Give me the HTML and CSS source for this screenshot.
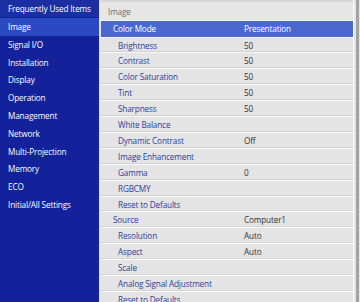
FILE: index.html
```html
<!DOCTYPE html>
<html lang="en">
<head>
    <meta charset="UTF-8">
    <title>Projector Menu</title>
    <link rel="stylesheet" href="styles.css">
</head>
<body>
    <div class="screen">
        <nav class="side">
            <div class="side-item fav">Frequently Used Items</div>
            <div class="side-item active">Image</div>
            <div class="side-item">Signal I/O</div>
            <div class="side-item">Installation</div>
            <div class="side-item">Display</div>
            <div class="side-item">Operation</div>
            <div class="side-item">Management</div>
            <div class="side-item">Network</div>
            <div class="side-item">Multi-Projection</div>
            <div class="side-item">Memory</div>
            <div class="side-item">ECO</div>
            <div class="side-item">Initial/All Settings</div>
        </nav>

        <section class="panel">
            <div class="list">
                <div class="panel-head">Image</div>
                <div class="row selected top"><span class="label">Color Mode</span><span class="value">Presentation</span></div>
                <div class="row sub"><span class="label">Brightness</span><span class="value">50</span></div>
                <div class="row sub"><span class="label">Contrast</span><span class="value">50</span></div>
                <div class="row sub"><span class="label">Color Saturation</span><span class="value">50</span></div>
                <div class="row sub"><span class="label">Tint</span><span class="value">50</span></div>
                <div class="row sub"><span class="label">Sharpness</span><span class="value">50</span></div>
                <div class="row sub"><span class="label">White Balance</span><span class="value"></span></div>
                <div class="row sub"><span class="label">Dynamic Contrast</span><span class="value">Off</span></div>
                <div class="row sub"><span class="label">Image Enhancement</span><span class="value"></span></div>
                <div class="row sub"><span class="label">Gamma</span><span class="value">0</span></div>
                <div class="row sub"><span class="label">RGBCMY</span><span class="value"></span></div>
                <div class="row sub"><span class="label">Reset to Defaults</span><span class="value"></span></div>
                <div class="row top"><span class="label">Source</span><span class="value">Computer1</span></div>
                <div class="row sub"><span class="label">Resolution</span><span class="value">Auto</span></div>
                <div class="row sub"><span class="label">Aspect</span><span class="value">Auto</span></div>
                <div class="row sub"><span class="label">Scale</span><span class="value"></span></div>
                <div class="row sub"><span class="label">Analog Signal Adjustment</span><span class="value"></span></div>
                <div class="row sub"><span class="label">Reset to Defaults</span><span class="value"></span></div>
            </div>
            <div class="scroll"></div>
        </section>
    </div>
</body>
</html>
```

FILE: styles.css
```css
html, body {
    margin: 0;
    padding: 0;
}
body {
    font-family: 'Open Sans', 'Noto Sans', sans-serif;
    font-size: 8.2px;
    font-weight: 500;
    letter-spacing: -0.15px;
    background-color: #e6e6e6;
    width: 360px;
    height: 302px;
    overflow: hidden;
}
.screen {
    display: flex;
    height: 302px;
}
.side {
    width: 99px;
    flex-shrink: 0;
    background-color: #13219a;
    border-right: 1px solid #dcdde8;
}
.side-item {
    height: 17.8px;
    line-height: 17.8px;
    padding-left: 8px;
    color: #ffffff;
    white-space: nowrap;
}
.side-item.fav {
    background-color: #1b2fa2;
    height: 17px;
    line-height: 17px;
    border-bottom: 1px solid #13219a;
}
.side-item.active {
    background-color: #2c49c4;
}
.panel {
    flex: 1;
    display: flex;
    padding-left: 1px;
    background-color: #e6e6e6;
}
.list {
    flex: 1;
    border-right: 1px solid #fafafa;
}
.panel-head {
    height: 18px;
    line-height: 20px;
    padding-left: 7px;
    color: #6e6e6e;
    font-weight: 400;
    border-top: 2px solid #d6d6d6;
}
.row {
    display: flex;
    height: 14.92px;
    line-height: 15px;
    background-color: #e4e4e4;
    border-bottom: 1px solid #f7f7f7;
    box-shadow: inset 0 -1px 0 #d3d3d3;
}
.row .label {
    width: 131px;
    flex-shrink: 0;
    padding-left: 12px;
    color: #2d3e9e;
    white-space: nowrap;
}
.row.sub .label {
    padding-left: 17px;
    width: 126px;
}
.row .value {
    color: #333333;
}
.row.selected {
    height: 15.5px;
    line-height: 15.5px;
    background-color: #4a68cf;
    border-top: 1px solid #f7f7f7;
    box-shadow: none;
}
.row.selected .label,
.row.selected .value {
    color: #ffffff;
}
.scroll {
    width: 3px;
    margin: 0 1px 0 2px;
    background-color: #a3a3a3;
}
```
